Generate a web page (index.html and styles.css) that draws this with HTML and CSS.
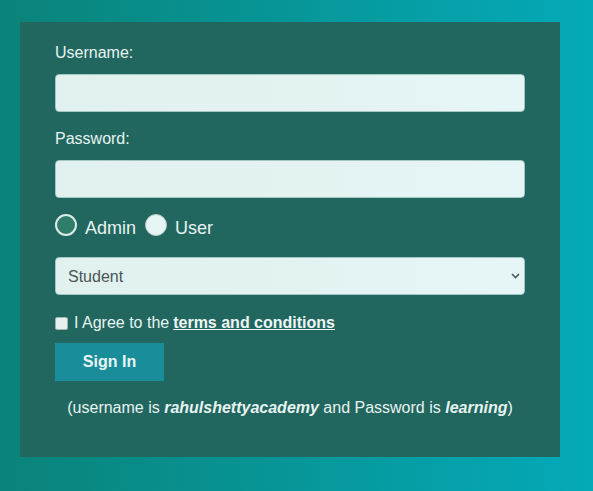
FILE: index.html
```html
<!DOCTYPE html>
<html>
<head>
<meta charset="utf-8">
<link rel="stylesheet" href="styles.css">
</head>
<body>
<div class="page">
  <form class="card">
    <label class="label" for="username">Username:</label>
    <input class="field" id="username" type="text">
    <label class="label label-gap" for="password">Password:</label>
    <input class="field" id="password" type="password">
    <div class="radios">
      <label class="radio-item"><input class="radio radio-admin" type="radio" name="role"><span class="radio-text">Admin</span></label>
      <label class="radio-item"><input class="radio radio-user" type="radio" name="role"><span class="radio-text">User</span></label>
    </div>
    <div class="select-wrap">
      <select class="field select">
        <option>Student</option>
        <option>Teacher</option>
        <option>Consultant</option>
      </select>
      <svg class="chevron" width="9" height="6" viewBox="0 0 9 6"><path d="M1 1 L4.5 4.5 L8 1" fill="none" stroke="#4b5a5a" stroke-width="1.6"/></svg>
    </div>
    <label class="terms"><input class="check" type="checkbox"> I Agree to the <a class="terms-link" href="#">terms and conditions</a></label>
    <div class="actions"><button class="btn" type="button">Sign In</button></div>
    <p class="hint">(username is <b><i>rahulshettyacademy</i></b> and Password is <b><i>learning</i></b>)</p>
  </form>
</div>
</body>
</html>
```
FILE: styles.css
```css
html, body {
  margin: 0;
  padding: 0;
}
body {
  font-family: "Liberation Sans", Arial, sans-serif;
  background: linear-gradient(to right, #0a8379, #04aab9);
  min-height: 100vh;
}
.page {
  padding: 22px 0 0 20px;
}
.card {
  width: 470px;
  background: #216760;
  padding: 19px 35px 37px 35px;
  display: flex;
  flex-direction: column;
  color: #e7f3f1;
}
.label {
  font-size: 16px;
  line-height: 24px;
  margin-bottom: 9px;
}
.label-gap {
  margin-top: 15px;
}
.field {
  box-sizing: border-box;
  height: 38px;
  width: 470px;
  margin: 0;
  border: 1px solid #a3c7c3;
  border-radius: 4px;
  background: linear-gradient(to right, #e1f1ef, #e6f5f5);
  font-family: "Liberation Sans", Arial, sans-serif;
  font-size: 16px;
  color: #4a5656;
}
.radios {
  display: flex;
  align-items: center;
  gap: 9px;
  margin-top: 16px;
  height: 22px;
  font-size: 18px;
}
.radio-item {
  display: flex;
  align-items: center;
  gap: 8px;
}
.radio-text {
  line-height: 22px;
  padding-top: 5px;
}
.radio {
  appearance: none;
  -webkit-appearance: none;
  margin: 0;
  width: 22px;
  height: 22px;
  border-radius: 50%;
  box-sizing: border-box;
}
.radio-admin {
  background: #2e7e6a;
  border: 2.5px solid #dcecea;
}
.radio-user {
  background: #e6f4f3;
  border: 1px solid #b9cfcc;
}
.select-wrap {
  position: relative;
  margin-top: 21px;
  height: 38px;
}
.select {
  appearance: none;
  -webkit-appearance: none;
  padding: 0 24px 0 12px;
}
.chevron {
  position: absolute;
  left: 456px;
  top: 16px;
  pointer-events: none;
}
.terms {
  margin-top: 16px;
  font-size: 16px;
  line-height: 24px;
  display: flex;
  align-items: center;
}
.check {
  appearance: none;
  -webkit-appearance: none;
  margin: 0 6px 0 0;
  width: 13px;
  height: 13px;
  box-sizing: border-box;
  border: 1px solid #9fb3b1;
  border-radius: 2px;
  background: #e6f1ef;
}
.terms-link {
  color: #eef6f5;
  font-weight: bold;
  text-decoration: underline;
  margin-left: 4px;
}
.actions {
  margin-top: 8px;
  display: flex;
}
.btn {
  width: 109px;
  height: 38px;
  border: none;
  border-radius: 0;
  background: #1a8d9b;
  color: #e9f5f5;
  font-family: "Liberation Sans", Arial, sans-serif;
  font-size: 16px;
  font-weight: bold;
  padding: 0;
}
.hint {
  margin: 15px 0 0 0;
  text-align: center;
  font-size: 16px;
  line-height: 24px;
}
```
